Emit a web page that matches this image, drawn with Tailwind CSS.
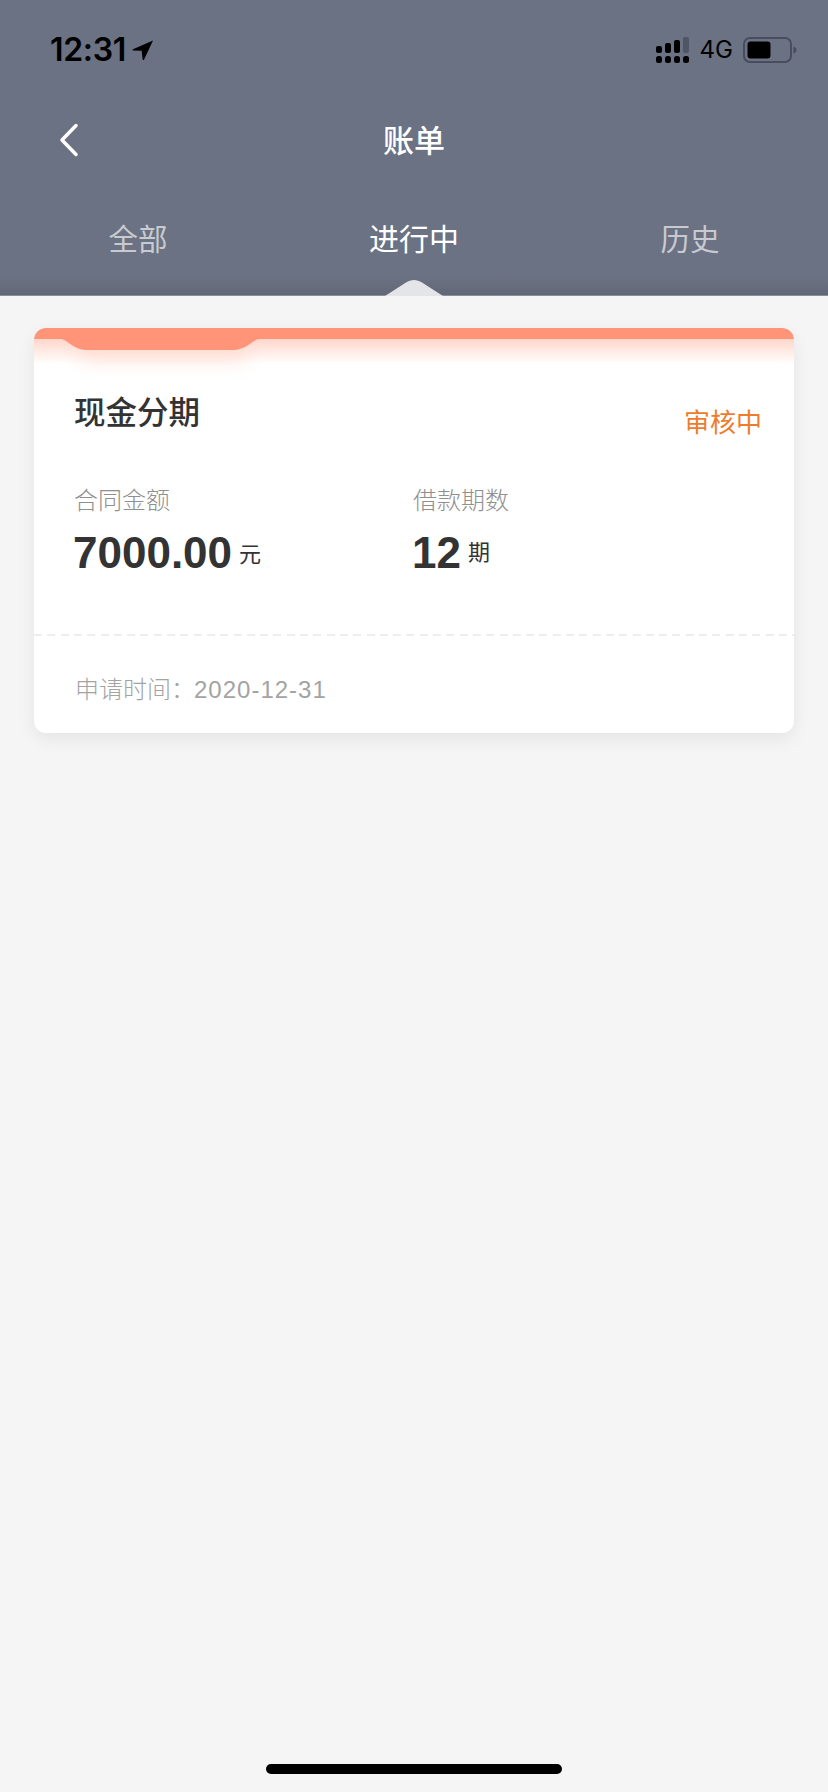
<!DOCTYPE html>
<html lang="zh-CN">
<head>
    <meta charset="UTF-8">
    <meta name="viewport" content="width=device-width, initial-scale=1.0">
    <title>账单</title>
    <script src="https://cdn.jsdelivr.net/npm/@tailwindcss/browser@4"></script>
</head>
<body class="bg-[#f5f5f5] font-['Liberation_Sans','Noto_Sans_CJK_SC',sans-serif]">
<div class="relative w-[828px] h-[1792px] overflow-hidden">
    <!-- Header -->
    <header class="relative h-[296px] bg-[#6b7283]">
        <div class="absolute inset-x-0 bottom-0 h-[20px] bg-gradient-to-b from-[#6b7283] to-[#626776]"></div>
        <div class="absolute inset-x-0 bottom-0 h-px bg-[#8a8f9b]"></div>

        <!-- Status bar -->
        <div class="relative flex items-center justify-between h-[100px] pl-[50px] pr-[31px]">
            <div class="flex items-center gap-[6px]">
                <span class="font-['Inter'] font-semibold text-[32px] leading-none tracking-[-0.3px] text-black">12:31</span>
                <svg width="22" height="22" viewBox="0 0 22 22"><path d="M21 1.500 1 10.200c-.8.4-.6 1.400.3 1.400l8.400.2.9 8.400c.1.900 1.200 1 1.500.2z" fill="#000"/></svg>
            </div>
            <div class="flex items-center">
                <svg width="34" height="27" viewBox="0 0 34 27">
                    <rect x="0" y="9" width="6" height="7" rx="2" fill="#000"/>
                    <rect x="9" y="6" width="6" height="10" rx="2" fill="#000"/>
                    <rect x="18" y="3" width="6" height="13" rx="2" fill="#000"/>
                    <rect x="27" y="0" width="6" height="16" rx="2" fill="#4f5564"/>
                    <rect x="0" y="19" width="6" height="7" rx="2.500" fill="#000"/>
                    <rect x="9" y="19" width="6" height="7" rx="2.500" fill="#000"/>
                    <rect x="18" y="19" width="6" height="7" rx="2.500" fill="#000"/>
                    <rect x="27" y="19" width="6" height="7" rx="2.500" fill="#000"/>
                </svg>
                <span class="ml-[10px] font-['Inter'] text-[24px] leading-none text-black">4G</span>
                <svg class="ml-[10px]" width="54" height="26" viewBox="0 0 54 26">
                    <rect x="1" y="1" width="47" height="24" rx="6" fill="none" stroke="#474d5c" stroke-width="2"/>
                    <rect x="4.500" y="4.500" width="23" height="17" rx="3" fill="#000"/>
                    <path d="M50.500 9.500c2 .6 3 2 3 3.500s-1 2.900-3 3.500z" fill="#474d5c"/>
                </svg>
            </div>
        </div>

        <!-- Nav bar -->
        <div class="relative flex items-center justify-center h-[42px] mt-[20px]">
            <svg class="absolute left-[59px] top-[3px]" width="20" height="34" viewBox="0 0 20 34"><path d="M17 2.500 3 17l14 14.500" fill="none" stroke="#fff" stroke-width="3.500" stroke-linecap="round" stroke-linejoin="round"/></svg>
            <h1 class="text-[31px] leading-none font-medium text-white">账单</h1>
        </div>

        <!-- Tabs -->
        <nav class="relative grid grid-cols-3 mt-[63px] text-center text-[29.500px] leading-none">
            <span class="text-[#c8cad0]">全部</span>
            <span class="text-white text-[30px]">进行中</span>
            <span class="text-[#c8cad0]">历史</span>
        </nav>

        <svg class="absolute left-[385px] bottom-0" width="58" height="17" viewBox="0 0 58 17"><path d="M0 17 21 3.500c5-3.500 11-3.500 16 0L58 17z" fill="#e4e5e9"/></svg>
    </header>

    <!-- Card -->
    <main class="px-[34px] pt-[32px]">
        <section class="relative h-[405px] bg-white rounded-[12px] shadow-[0_6px_18px_rgba(0,0,0,0.07)] overflow-hidden">
            <div class="absolute inset-x-0 top-[10px] h-[26px] bg-gradient-to-b from-[#ffd5c8] to-white"></div>
            <svg class="absolute left-0 top-0 overflow-visible" width="761" height="70" viewBox="0 0 761 70">
                <rect x="44" y="18" width="170" height="16" rx="8" fill="#ffc9b8" opacity=".45" style="filter:blur(9px)"/>
                <path d="M0 0h761v11H226c-8 0-12 11-28 11H54c-16 0-20-11-28-11H0z" fill="#ff9478"/>
            </svg>

            <div class="relative flex justify-between pl-[40px] pr-[32px] pt-[67px]">
                <h2 class="text-[31.500px] leading-[36px] font-medium text-[#333]">现金分期</h2>
                <span class="mt-[15px] text-[26px] leading-none text-[#ee7c2e]">审核中</span>
            </div>

            <div class="relative grid grid-cols-[339px_1fr] pl-[40px] mt-[50px]">
                <div>
                    <p class="text-[24px] leading-[30px] font-light text-[#8f8f8f]">合同金额</p>
                    <p class="flex items-center mt-[11px] -ml-px"><span class="text-[44px] leading-[52px] font-bold text-[#333]">7000.00</span><span class="ml-[7px] mt-[4px] text-[22px] leading-none text-[#333]">元</span></p>
                </div>
                <div>
                    <p class="text-[24px] leading-[30px] font-light text-[#8f8f8f]">借款期数</p>
                    <p class="flex items-center mt-[11px] -ml-px"><span class="text-[44px] leading-[52px] font-bold text-[#333]">12</span><span class="ml-[7px] text-[22px] leading-none text-[#333]">期</span></p>
                </div>
            </div>

            <div class="relative h-[2px] mt-[55px] bg-[repeating-linear-gradient(90deg,#eeeeee_0,#eeeeee_8px,transparent_8px,transparent_13.300px)]"></div>

            <p class="relative pl-[41px] mt-[39px] text-[24px] leading-[30px] font-light text-[#a3a3a3]">申请时间：<span class="-ml-px tracking-[1px]">2020-12-31</span></p>
        </section>
    </main>

    <!-- Home indicator -->
    <div class="absolute left-[266px] bottom-[18px] w-[296px] h-[10px] rounded-full bg-black"></div>
</div>
</body>
</html>
